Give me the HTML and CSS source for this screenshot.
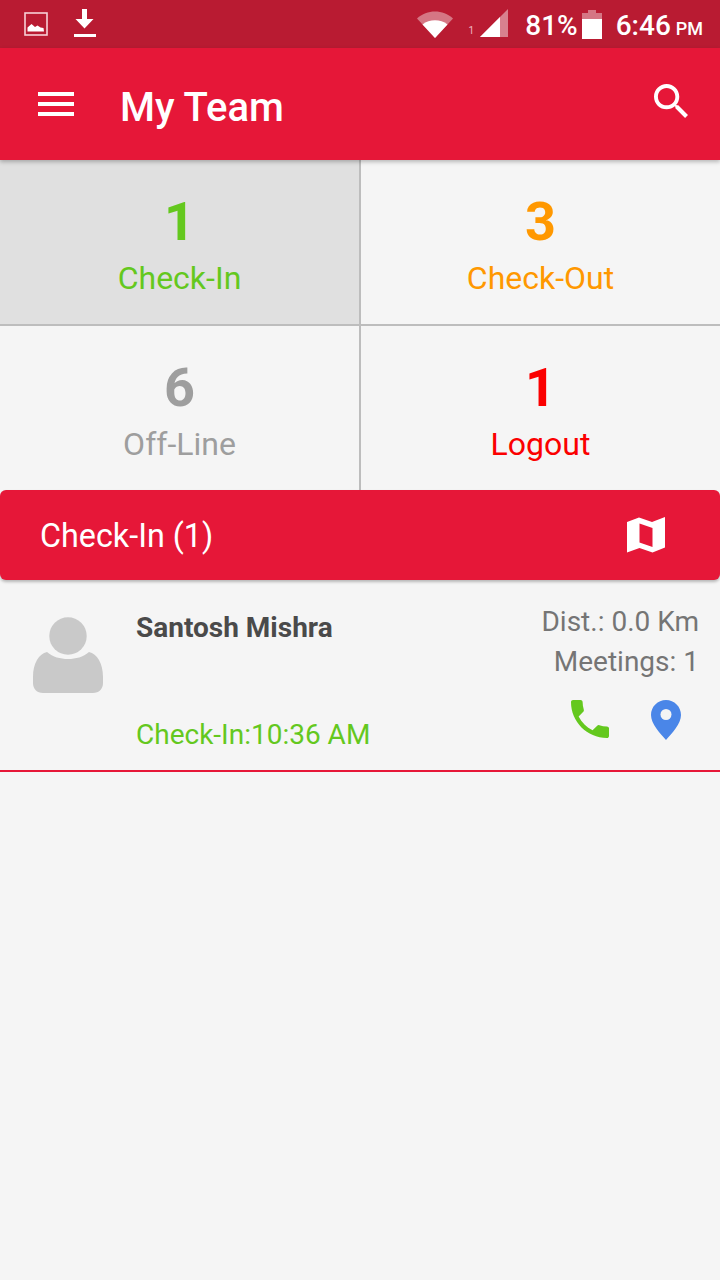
FILE: index.html
```html
<!DOCTYPE html>
<html>
  <head>
    <title>My Team</title>
    <meta http-equiv="content-type" content="text/html;charset=utf-8">
    <link rel="stylesheet" href="styles.css">
  </head>
  <body>
    <div class="status">
      <svg class="st-image" width="24" height="24" viewBox="0 0 24 24">
        <rect x="1" y="1" width="22" height="22" fill="none" stroke="#f8d0d6" stroke-width="1.6"/>
        <path d="M3.5 19.500v-4l4-3.500 3.500 3 2.500-1.500 3 2 3 .5.5 3.500z" fill="#fff"/>
      </svg>
      <svg class="st-down" width="24" height="32" viewBox="0 0 24 32">
        <path d="M9 1h5v10h6.500L11.500 20.500 2.500 11H9zM1 26h22v3H1z" fill="#fff"/>
      </svg>
      <div class="st-right">
        <svg class="st-wifi" width="36" height="28" viewBox="0 0 36 28">
          <path d="M0 8.500C10-.8 26-.8 36 8.500L18 28z" fill="#fff" fill-opacity=".4"/>
          <path d="M5.500 14.500c7-5.600 18-5.600 25 0L18 28z" fill="#fff"/>
        </svg>
        <span class="st-sim">1</span>
        <svg class="st-signal" width="30" height="30" viewBox="0 0 30 30">
          <path d="M0 28L28 0v28z" fill="#fff" fill-opacity=".45"/>
          <path d="M0 28L20 8v20z" fill="#fff"/>
        </svg>
        <span class="st-pct">81%</span>
        <svg class="st-batt" width="20" height="29" viewBox="0 0 20 29">
          <path d="M6 0h8v3h6v7H0V3h6z" fill="#fff" fill-opacity=".4"/>
          <path d="M0 9h20v20H0z" fill="#fff"/>
        </svg>
        <span class="st-time">6:46 <small>PM</small></span>
      </div>
    </div>

    <div class="toolbar">
      <div class="menu-btn"><i></i><i></i><i></i></div>
      <h1>My Team</h1>
      <svg class="search" width="34" height="34" viewBox="3 3 17.500 17.500">
        <path d="M15.500 14h-.79l-.28-.27C15.410 12.590 16 11.110 16 9.500 16 5.910 13.090 3 9.500 3S3 5.910 3 9.500 5.910 16 9.500 16c1.610 0 3.090-.59 4.230-1.570l.27.28v.79l5 4.990L20.490 19l-4.990-5zm-6 0C7.010 14 5 11.990 5 9.500S7.010 5 9.500 5 14 7.010 14 9.500 11.990 14 9.500 14z" fill="#fff"/>
      </svg>
    </div>

    <div class="stats">
      <div class="stat selected green"><b>1</b><span>Check-In</span></div>
      <div class="stat orange"><b>3</b><span>Check-Out</span></div>
      <div class="stat grey"><b>6</b><span>Off-Line</span></div>
      <div class="stat red"><b>1</b><span>Logout</span></div>
    </div>

    <div class="section">
      <span>Check-In (1)</span>
      <svg width="38" height="36" viewBox="0 0 38 36">
        <path d="M0 5l12-4.500 13 4.500 13-5v30.500L25.500 35.500 12.500 31 0 35.500zM12.500 6.500v19l13 4.500V11z" fill="#fff" fill-rule="evenodd"/>
      </svg>
    </div>

    <div class="row">
      <svg class="avatar" width="70" height="76" viewBox="0 0 70 76">
        <circle cx="35" cy="19" r="18.700" fill="#c9c9c9"/>
        <path d="M14 35C20 40 27 42 35 42S50 40 56 35C64 37 70 46 70 60V66C70 72 66 76 60 76H10C4 76 0 72 0 66V60C0 46 6 37 14 35z" fill="#c9c9c9"/>
      </svg>
      <div class="who">
        <div class="name">Santosh Mishra</div>
        <div class="since">Check-In:10:36 AM</div>
      </div>
      <div class="info">
        <div>Dist.: 0.0 Km</div>
        <div>Meetings: 1</div>
        <div class="actions">
          <svg width="38" height="38" viewBox="3 3 18 18">
            <path d="M6.620 10.790c1.440 2.830 3.760 5.140 6.590 6.590l2.200-2.200c.27-.27.67-.36 1.020-.24 1.120.37 2.330.57 3.570.57.55 0 1 .45 1 1V20c0 .55-.45 1-1 1-9.390 0-17-7.610-17-17 0-.55.45-1 1-1h3.500c.55 0 1 .45 1 1 0 1.250.2 2.450.57 3.570.11.35.03.74-.25 1.020l-2.200 2.200z" fill="#64c81e"/>
          </svg>
          <svg width="30" height="40" viewBox="0 0 30 40">
            <path d="M15 0C6.700 0 0 6.700 0 15c0 9 9 18 15 25 6-7 15-16 15-25C30 6.700 23.300 0 15 0z" fill="#4a86e8"/>
            <circle cx="15" cy="14.500" r="5.500" fill="#f4f4f4"/>
          </svg>
        </div>
      </div>
    </div>
  </body>
</html>
```

FILE: styles.css
```css
html, body {
  height: 100%;
}

body {
  margin: 0;
  background: #f5f5f5;
  font-family: Roboto, "Liberation Sans", sans-serif;
  overflow: hidden;
}

.status {
  height: 48px;
  background: #b91b32;
  display: flex;
  align-items: center;
  padding: 0 17px 0 24px;
  color: #fff;
}

.st-down {
  margin-left: 25px;
}

.st-right {
  margin-left: auto;
  display: flex;
  align-items: center;
}

.st-sim {
  font-size: 10px;
  color: #f0b8c2;
  align-self: flex-end;
  margin: 0 6px 6px 16px;
}

.st-pct {
  font-size: 28px;
  font-weight: 500;
  margin: 2px 0 0 15px;
}

.st-batt {
  margin-left: 4px;
}

.st-time {
  font-size: 28px;
  font-weight: 500;
  margin: 2px 0 0 14px;
}

.st-time small {
  font-size: 18px;
  margin-left: -2px;
}

.toolbar {
  height: 112px;
  background: #e61738;
  display: flex;
  align-items: center;
  padding: 0 32px 0 38px;
  position: relative;
  box-shadow: 0 2px 4px rgba(0,0,0,.25);
}

.menu-btn {
  width: 36px;
  display: flex;
  flex-direction: column;
  gap: 6px;
}

.menu-btn i {
  display: block;
  height: 4px;
  background: #fff;
}

.toolbar h1 {
  margin: 6px 0 0 46px;
  font-size: 40px;
  font-weight: 500;
  color: #fff;
  flex: 1;
}

.search {
  margin-top: -7px;
}

.stats {
  display: grid;
  grid-template-columns: 361px 359px;
  grid-template-rows: 166px 164px;
}

.stat {
  display: flex;
  flex-direction: column;
  align-items: center;
  padding-top: 30px;
  box-sizing: border-box;
  border-right: 2px solid #bdbdbd;
  border-bottom: 2px solid #bdbdbd;
}

.stat:nth-child(2n) {
  border-right: 0;
}

.stat:nth-child(n+3) {
  border-bottom: 0;
}

.stat b {
  font-size: 54px;
  line-height: 63px;
  font-weight: 700;
}

.stat span {
  font-size: 32px;
  line-height: 38px;
  margin-top: 6px;
}

.selected {
  background: #e0e0e0;
}

.green { color: #64c81e; }
.orange { color: #ff9800; }
.grey { color: #9e9e9e; }
.red { color: #fb0000; }

.section {
  height: 90px;
  background: #e61738;
  border-radius: 6px;
  display: flex;
  align-items: center;
  justify-content: space-between;
  padding: 0 55px 0 40px;
  color: #fff;
  font-size: 32.300px;
  box-shadow: 0 2px 3px rgba(0,0,0,.25);
  position: relative;
}

.section span {
  margin-top: 2px;
}

.row {
  height: 192px;
  box-sizing: border-box;
  border-bottom: 2px solid #e61738;
  display: flex;
  position: relative;
}

.avatar {
  margin: 37px 0 0 33px;
}

.who {
  margin-left: 33px;
  display: flex;
  flex-direction: column;
  justify-content: space-between;
  padding: 31px 0 18px;
}

.name {
  font-size: 28px;
  font-weight: 700;
  color: #4a4a4a;
  line-height: 34px;
}

.since {
  font-size: 28px;
  color: #64c81e;
  line-height: 34px;
}

.info {
  margin-left: auto;
  padding: 22px 21px 0 0;
  text-align: right;
  font-size: 28px;
  line-height: 40px;
  color: #757575;
}

.actions {
  display: flex;
  justify-content: flex-end;
  gap: 42px;
  margin-top: 18px;
  padding-right: 18px;
}
```
